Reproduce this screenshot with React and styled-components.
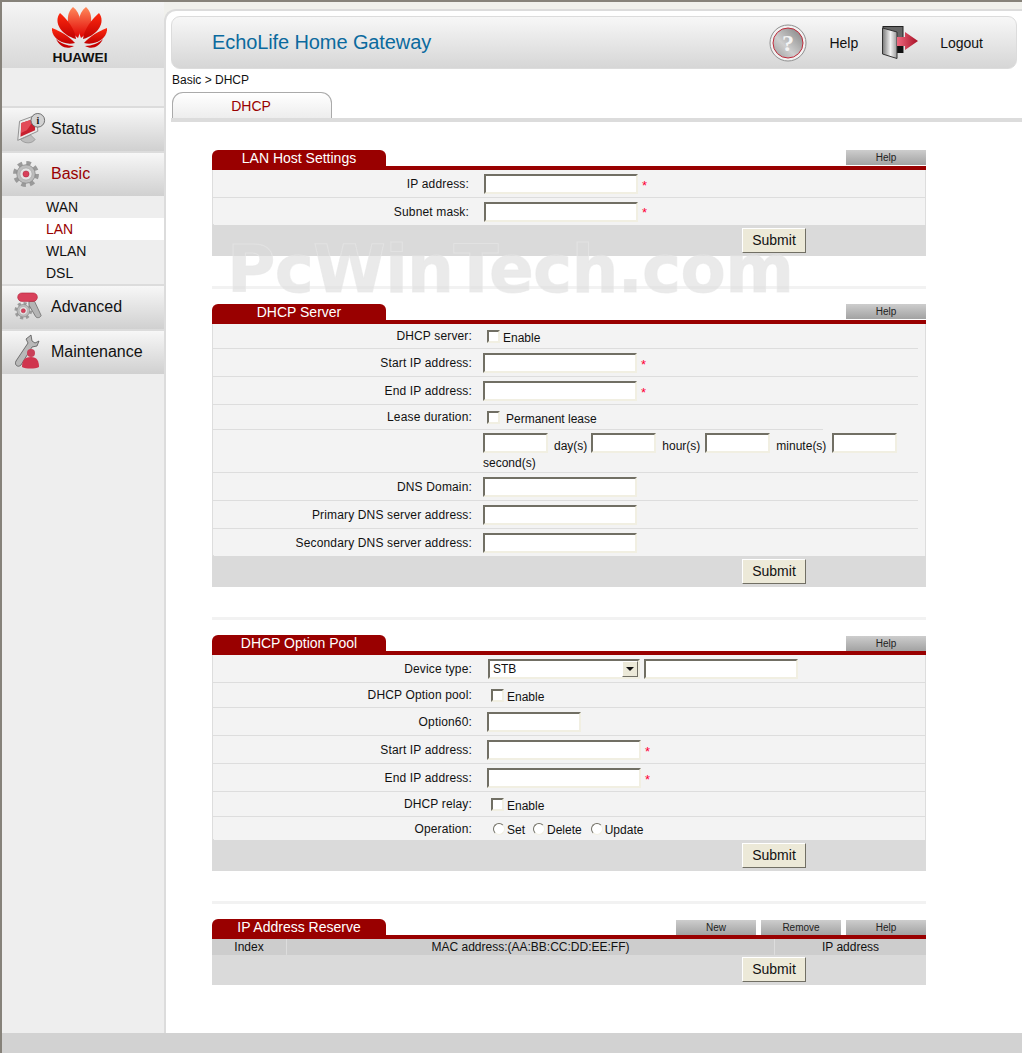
import React from 'react';
import styled, { createGlobalStyle } from 'styled-components';

const GlobalStyle = createGlobalStyle`
  html, body { margin: 0; padding: 0; background: #fff; }
  body { font-family: "Liberation Sans", Arial, sans-serif; font-size: 12px; color: #111; }
  * { box-sizing: border-box; }
`;

const Page = styled.div`
  position: relative;
  width: 1022px;
  height: 1053px;
  display: flex;
  flex-direction: column;
  border-top: 2px solid #86827a;
  border-left: 2px solid #86827a;
  overflow: hidden;
`;

const Body = styled.div`
  flex: 1;
  display: flex;
  min-height: 0;
`;

const PageFooter = styled.div`
  height: 20px;
  background: #d2d2d2;
`;

const Sidebar = styled.nav`
  width: 162px;
  flex-shrink: 0;
  background: #eee;
  display: flex;
  flex-direction: column;
`;

const LogoBox = styled.div`
  height: 66px;
  margin-bottom: 38px;
  background: linear-gradient(#f5f5f5, #d8d8d8);
  display: flex;
  flex-direction: column;
  align-items: center;
  padding: 5px 7px 0 0;
`;

const LogoText = styled.span`
  font-size: 13.5px;
  line-height: 13px;
  margin-top: 2px;
  font-weight: 700;
  color: #111;
  transform: scaleX(1.02);
`;

const NavItem = styled.a`
  height: 45px;
  display: flex;
  align-items: center;
  gap: 4px;
  padding: 0 0 2px 9px;
  border-top: 2px solid #dcdcdc;
  background: linear-gradient(#f7f7f7, #d0d0d0);
  font-size: 16px;
  color: ${(p) => (p.$active ? '#990000' : '#111')};
`;

const NavIconBox = styled.span`
  width: 36px;
  height: 36px;
  display: flex;
  align-items: center;
  padding-left: ${(p) => p.$offset || 0}px;
`;

const SubNav = styled.div`
  display: flex;
  flex-direction: column;
`;

const SubNavItem = styled.a`
  height: 22px;
  line-height: 22px;
  padding-left: 44px;
  font-size: 14px;
  color: ${(p) => (p.$active ? '#990000' : '#111')};
  background: ${(p) => (p.$active ? '#fff' : 'transparent')};
`;

const Main = styled.main`
  flex: 1;
  min-width: 0;
  background: #f0f0ec;
  padding-top: 7px;
`;

const MainInner = styled.div`
  height: 100%;
  background: #fff;
  border-top: 2px solid #dcdcdc;
  border-left: 2px solid #dcdcdc;
  border-top-left-radius: 12px;
  padding: 5px 0 0 5px;
`;

const TopBar = styled.header`
  width: 846px;
  height: 53px;
  display: flex;
  align-items: center;
  padding-left: 40px;
  border: 1px solid #dcdcdc;
  border-radius: 9px;
  background: linear-gradient(#f7f7f7, #d6d6d6);
`;

const ProductName = styled.h1`
  flex: 1;
  margin: 0;
  font-size: 20px;
  font-weight: 400;
  letter-spacing: -0.1px;
  color: #0b6a9e;
`;

const TopLink = styled.a`
  font-size: 14px;
  color: #111;
  margin: 0 ${(p) => p.$after}px 0 ${(p) => p.$before}px;
`;

const Breadcrumb = styled.div`
  height: 23px;
  line-height: 23px;
  padding-left: 1px;
  font-size: 12px;
`;

const TabStrip = styled.div`
  height: 30px;
  padding-left: 1px;
  border-bottom: 4px solid #dcdcdc;
`;

const Tab = styled.div`
  width: 160px;
  height: 26px;
  padding-right: 2px;
  text-align: center;
  line-height: 27px;
  font-size: 14px;
  color: #990000;
  border: 1px solid #aaa;
  border-bottom: 0;
  border-radius: 11px 11px 0 0;
  background: linear-gradient(#fff, #ededed);
`;

const Content = styled.div`
  width: 714px;
  margin: 28px 0 0 41px;
`;

const SectionHead = styled.div`
  height: 16px;
  display: flex;
  justify-content: space-between;
`;

const SectionTitle = styled.h2`
  width: 174px;
  height: 16px;
  margin: 0;
  font-size: 14px;
  font-weight: 400;
  line-height: 16px;
  text-align: center;
  color: #fff;
  background: #990000;
  border-radius: 6px 6px 0 0;
`;

const HeadButtons = styled.div`
  display: flex;
  gap: 5px;
  margin-top: ${(p) => (p.$low ? 1 : 0)}px;
`;

const HeadButton = styled.button`
  width: 80px;
  height: 15px;
  padding: 0;
  border: 0;
  font: 10px/15px "Liberation Sans", Arial, sans-serif;
  color: #222;
  background: linear-gradient(#cdcdcd, #a2a2a2);
`;

const RedBar = styled.div`
  height: 4px;
  background: #990000;
`;

const Rows = styled.div`
  background: #f3f3f3;
  border-left: 1px solid #ddd;
  border-right: 1px solid #ddd;
`;

const Row = styled.div`
  height: ${(p) => p.$h}px;
  display: grid;
  grid-template-columns: ${(p) => p.$label}px 1fr;
  align-items: ${(p) => (p.$top ? 'start' : 'center')};
  background-image: linear-gradient(#ddd, #ddd);
  background-repeat: no-repeat;
  background-size: ${(p) => p.$line || 714}px 1px;
  background-position: left bottom;
`;

const Label = styled.label`
  text-align: right;
  padding-right: ${(p) => p.$gap}px;
  padding-bottom: ${(p) => (p.$up ? 2 : 0)}px;
  font-size: 12px;
  letter-spacing: 0.15px;
  color: #111;
`;

const Field = styled.div`
  display: flex;
  align-items: center;
  font-size: 12px;
`;

const TextInput = styled.input`
  width: ${(p) => p.$w || 154}px;
  height: 20px;
  padding: 0 2px;
  background: #fff;
  border: 2px solid;
  border-color: #716f64 #f1efe2 #f1efe2 #716f64;
  flex-shrink: 0;
`;

const Required = styled.span`
  position: relative;
  top: 1px;
  margin-left: 4px;
  color: #ff0033;
  font-size: 13px;
`;

const CheckBox = styled.input`
  appearance: none;
  width: 13px;
  height: 13px;
  margin: 0 3px 0 4px;
  background: #fff;
  border: 2px solid;
  border-color: #716f64 #f1efe2 #f1efe2 #716f64;
  flex-shrink: 0;
`;

const Radio = styled.input`
  appearance: none;
  width: 12px;
  height: 12px;
  margin: 0 2px 0 ${(p) => p.$left || 0}px;
  background: #fff;
  border-radius: 50%;
  border: 1px solid;
  border-color: #716f64 #f1efe2 #f1efe2 #716f64;
`;

const CheckText = styled.span`
  font-size: 12px;
  margin-left: ${(p) => p.$left || 0}px;
  position: relative;
  top: 1px;
`;

const Duration = styled.div`
  width: 430px;
  padding-top: 3px;
  font-size: 12px;
  line-height: 20px;
`;

const DurationInput = styled(TextInput)`
  width: 65px;
  vertical-align: top;
`;

const Unit = styled.span`
  margin: 0 ${(p) => p.$after}px 0 ${(p) => p.$before}px;
  vertical-align: top;
  position: relative;
  top: 3px;
`;

const SelectBox = styled.div`
  width: 152px;
  height: 20px;
  display: flex;
  margin: 0 4px 0 1px;
  background: #fff;
  border: 2px solid;
  border-color: #716f64 #f1efe2 #f1efe2 #716f64;
`;

const SelectField = styled.select`
  appearance: none;
  flex: 1;
  min-width: 0;
  height: 100%;
  border: 0;
  padding: 0 0 0 3px;
  background: #fff;
  font: 12px "Liberation Sans", Arial, sans-serif;
  color: #111;
`;

const SelectArrow = styled.span`
  width: 16px;
  display: flex;
  align-items: center;
  justify-content: center;
  background: #ece9d8;
  border: 1px solid;
  border-color: #fff #716f64 #716f64 #fff;
  &::after {
    content: '';
    border: 4px solid transparent;
    border-top: 4px solid #111;
    border-bottom: 0;
  }
`;

const SubmitBar = styled.div`
  height: 31px;
  background: #dadada;
  display: flex;
  padding: 3px 120px 0 0;
  justify-content: flex-end;
`;

const SubmitButton = styled.button`
  width: 64px;
  height: 25px;
  padding: 0 0 2px;
  background: #ece9d8;
  border: 1px solid;
  border-color: #fff #716f64 #716f64 #fff;
  font: 14px "Liberation Sans", Arial, sans-serif;
  color: #111;
`;

const Divider = styled.div`
  height: 3px;
  margin: 30px 0 15px;
  background: #f2f2f2;
`;

const TableHead = styled.div`
  height: 15px;
  display: grid;
  grid-template-columns: 74px 1fr 151px;
  gap: 1px;
  background: #ddd;
`;

const TableCell = styled.div`
  background: #cdcdcd;
  text-align: center;
  line-height: 16px;
  font-size: 12px;
`;

const Watermark = styled.div`
  position: absolute;
  left: 225px;
  top: 228px;
  font-family: "DejaVu Sans", sans-serif;
  font-size: 66px;
  line-height: 80px;
  font-weight: 700;
  letter-spacing: -0.7px;
  white-space: nowrap;
  color: rgba(218, 218, 218, 0.58);
  -webkit-text-stroke: 1px rgba(232, 232, 232, 0.6);
  pointer-events: none;
`;

const HuaweiLogo = () => (
  <svg width="55" height="42" viewBox="0 0 55 42">
    <defs>
      <linearGradient id="petalTop" x1="0" y1="0" x2="0" y2="1">
        <stop offset="0" stopColor="#ff8a5c" />
        <stop offset="1" stopColor="#e00000" />
      </linearGradient>
      <linearGradient id="petalMid" x1="0" y1="0" x2="0" y2="1">
        <stop offset="0" stopColor="#ff2a10" />
        <stop offset="1" stopColor="#c00000" />
      </linearGradient>
    </defs>
    {[1, -1].map((side) => (
      <g key={side} transform={side < 0 ? 'translate(55 0) scale(-1 1)' : undefined}>
        <path d="M29 31C24 20 26 6 34 0C42 7 41 22 29 31Z" fill="url(#petalTop)" />
        <path d="M31 32C32 22 40 12 47 6C54 15 46 28 31 32Z" fill="url(#petalMid)" />
        <path d="M32 36C38 29 47 24 55 21C56 31 44 39 32 36Z" fill="url(#petalMid)" />
        <path d="M33 39C40 39 47 36 51 32C47 40 40 43 33 39Z" fill="#c80000" />
      </g>
    ))}
  </svg>
);

// 8 teeth from a dashed ring, disc and red hub on top
const Gear = ({ cx, cy, r }) => (
  <g>
    <circle cx={cx} cy={cy} r={r} fill="none" stroke="#9a9a9a" strokeWidth={r * 0.36} strokeDasharray={`${r * 0.42} ${r * 0.365}`} />
    <circle cx={cx} cy={cy} r={r * 0.84} fill="#bdbdbd" stroke="#808080" strokeWidth="0.7" />
    <circle cx={cx} cy={cy} r={r * 0.55} fill="#e4e4e4" stroke="#a5a5a5" strokeWidth="0.6" />
    <circle cx={cx} cy={cy} r={r * 0.28} fill="#d8405a" stroke="#a82038" strokeWidth="0.5" />
  </g>
);

const StatusIcon = () => (
  <svg width="31" height="33" viewBox="0 0 34 36">
    <path d="M6 30C10 35 19 35 22 30L17 25Z" fill="#bdbdbd" stroke="#888" strokeWidth="0.7" />
    <path d="M5 10L24 3L25 21L3 31Z" fill="#eaeaea" stroke="#8a8a8a" />
    <path d="M7 12L22 7L22 20L6 27Z" fill="#c8202f" />
    <path d="M7 12L22 7L13 20L6.5 23Z" fill="#e24a58" />
    <circle cx="25" cy="9" r="7.5" fill="#d2d2d2" stroke="#666" />
    <text x="25" y="13" fontSize="11" fontWeight="700" textAnchor="middle" fontFamily="Liberation Serif, serif" fill="#111">i</text>
  </svg>
);

const BasicIcon = () => (
  <svg width="28" height="30" viewBox="0 0 28 30">
    <Gear cx={14} cy={15} r={11} />
  </svg>
);

const AdvancedIcon = () => (
  <svg width="30" height="32" viewBox="0 0 32 32">
    <Gear cx={11} cy={20} r={8} />
    <path d="M17 10L23 10L30 25C29 28 25 28 24 26L17 14Z" fill="#b5b5b5" stroke="#666" strokeWidth="0.8" />
    <rect x="5" y="1" width="21" height="9" rx="4.5" fill="#d8405a" stroke="#b02038" strokeWidth="0.6" />
  </svg>
);

const MaintenanceIcon = () => (
  <svg width="30" height="36" viewBox="0 0 30 36">
    <path d="M20 1L15 5L17 9L5 27C3 31 7 34 10 31L21 13L26 12L28 7L24 9L21 7Z" fill="#b9b9b9" stroke="#555" strokeWidth="0.8" />
    <circle cx="20" cy="19" r="4" fill="#c94058" />
    <path d="M11 33C11 26 14 23 20 23C26 23 28 27 28 33C24 35 15 35 11 33Z" fill="#d0354e" />
  </svg>
);

const HelpIcon = () => (
  <svg width="38" height="38" viewBox="0 0 38 38">
    <defs>
      <linearGradient id="helpFill" x1="1" y1="0" x2="0" y2="1">
        <stop offset="0" stopColor="#7f7f7f" />
        <stop offset="0.6" stopColor="#cfcfcf" />
        <stop offset="1" stopColor="#9a9a9a" />
      </linearGradient>
    </defs>
    <circle cx="19" cy="19" r="18" fill="#f2f2f2" stroke="#8f8f8f" />
    <circle cx="19" cy="19" r="15" fill="url(#helpFill)" stroke="#c02a3a" strokeWidth="1" />
    <text x="19" y="27" fontSize="24" fontWeight="700" textAnchor="middle" fontFamily="Liberation Serif, serif" fill="#f4f4f4">?</text>
  </svg>
);

const LogoutIcon = () => (
  <svg width="36" height="33" viewBox="0 0 36 33">
    <defs>
      <linearGradient id="doorFill" x1="0" y1="0" x2="1" y2="0">
        <stop offset="0" stopColor="#777" />
        <stop offset="0.55" stopColor="#f2f2f2" />
        <stop offset="1" stopColor="#999" />
      </linearGradient>
      <linearGradient id="arrowFill" x1="0" y1="0" x2="1" y2="0">
        <stop offset="0" stopColor="#ef6a80" />
        <stop offset="1" stopColor="#a80f25" />
      </linearGradient>
    </defs>
    <rect x="1" y="0.5" width="20" height="26" fill="#666" stroke="#222" />
    <rect x="15" y="17" width="6" height="10" fill="#111" />
    <path d="M0.5 2L15 6L15 32.5L0.5 28Z" fill="url(#doorFill)" stroke="#333" />
    <path d="M15 11L23 11L23 6L36 15L23 24L23 20L15 20Z" fill="url(#arrowFill)" />
  </svg>
);

const SectionHeader = ({ title, buttons = ['Help'], low }) => (
  <>
    <SectionHead>
      <SectionTitle>{title}</SectionTitle>
      <HeadButtons $low={low}>
        {buttons.map((b) => (
          <HeadButton key={b}>{b}</HeadButton>
        ))}
      </HeadButtons>
    </SectionHead>
    <RedBar />
  </>
);

const Submit = () => (
  <SubmitBar>
    <SubmitButton>Submit</SubmitButton>
  </SubmitBar>
);

const server = { $label: 270 };
const pool = { $label: 274 };

const App = () => (
  <Page>
    <GlobalStyle />
    <Body>
      <Sidebar>
        <LogoBox>
          <HuaweiLogo />
          <LogoText>HUAWEI</LogoText>
        </LogoBox>
        <NavItem><NavIconBox $offset={4}><StatusIcon /></NavIconBox>Status</NavItem>
        <NavItem $active><NavIconBox $offset={1}><BasicIcon /></NavIconBox>Basic</NavItem>
        <SubNav>
          <SubNavItem>WAN</SubNavItem>
          <SubNavItem $active>LAN</SubNavItem>
          <SubNavItem>WLAN</SubNavItem>
          <SubNavItem>DSL</SubNavItem>
        </SubNav>
        <NavItem><NavIconBox $offset={2}><AdvancedIcon /></NavIconBox>Advanced</NavItem>
        <NavItem><NavIconBox><MaintenanceIcon /></NavIconBox>Maintenance</NavItem>
      </Sidebar>

      <Main>
        <MainInner>
          <TopBar>
            <ProductName>EchoLife Home Gateway</ProductName>
            <HelpIcon />
            <TopLink $before={22} $after={24}>Help</TopLink>
            <LogoutIcon />
            <TopLink $before={22} $after={33}>Logout</TopLink>
          </TopBar>
          <Breadcrumb>Basic &gt; DHCP</Breadcrumb>
          <TabStrip>
            <Tab>DHCP</Tab>
          </TabStrip>

          <Content>
            <SectionHeader title="LAN Host Settings" />
            <Rows>
              <Row $h={28} $label={271}>
                <Label $gap={15}>IP address:</Label>
                <Field><TextInput /><Required>*</Required></Field>
              </Row>
              <Row $h={27} $label={271} $line={1}>
                <Label $gap={15}>Subnet mask:</Label>
                <Field><TextInput /><Required>*</Required></Field>
              </Row>
            </Rows>
            <Submit />
            <Divider />

            <SectionHeader title="DHCP Server" />
            <Rows>
              <Row $h={25} {...server} $line={705}>
                <Label $gap={11} $up>DHCP server:</Label>
                <Field><CheckBox type="checkbox" /><CheckText>Enable</CheckText></Field>
              </Row>
              <Row $h={28} {...server} $line={705}>
                <Label $gap={11}>Start IP address:</Label>
                <Field><TextInput /><Required>*</Required></Field>
              </Row>
              <Row $h={28} {...server} $line={705}>
                <Label $gap={11}>End IP address:</Label>
                <Field><TextInput /><Required>*</Required></Field>
              </Row>
              <Row $h={25} {...server} $line={610}>
                <Label $gap={11} $up>Lease duration:</Label>
                <Field><CheckBox type="checkbox" /><CheckText $left={3}>Permanent lease</CheckText></Field>
              </Row>
              <Row $h={43} {...server} $top $line={705}>
                <span />
                <Duration>
                  <DurationInput />
                  <Unit $before={6} $after={4}>day(s)</Unit>
                  <DurationInput />
                  <Unit $before={6} $after={5}>hour(s)</Unit>
                  <DurationInput />
                  <Unit $before={6} $after={6}>minute(s)</Unit>
                  <DurationInput />
                  <br />
                  second(s)
                </Duration>
              </Row>
              <Row $h={28} {...server} $line={705}>
                <Label $gap={11}>DNS Domain:</Label>
                <Field><TextInput /></Field>
              </Row>
              <Row $h={28} {...server} $line={705}>
                <Label $gap={11}>Primary DNS server address:</Label>
                <Field><TextInput /></Field>
              </Row>
              <Row $h={27} {...server} $line={1}>
                <Label $gap={11}>Secondary DNS server address:</Label>
                <Field><TextInput /></Field>
              </Row>
            </Rows>
            <Submit />
            <Divider />

            <SectionHeader title="DHCP Option Pool" low />
            <Rows>
              <Row $h={28} {...pool}>
                <Label $gap={15}>Device type:</Label>
                <Field>
                  <SelectBox>
                    <SelectField defaultValue="STB"><option>STB</option></SelectField>
                    <SelectArrow />
                  </SelectBox>
                  <TextInput />
                </Field>
              </Row>
              <Row $h={25} {...pool}>
                <Label $gap={15} $up>DHCP Option pool:</Label>
                <Field><CheckBox type="checkbox" /><CheckText>Enable</CheckText></Field>
              </Row>
              <Row $h={28} {...pool}>
                <Label $gap={15}>Option60:</Label>
                <Field><TextInput $w={94} /></Field>
              </Row>
              <Row $h={28} {...pool}>
                <Label $gap={15}>Start IP address:</Label>
                <Field><TextInput /><Required>*</Required></Field>
              </Row>
              <Row $h={28} {...pool}>
                <Label $gap={15}>End IP address:</Label>
                <Field><TextInput /><Required>*</Required></Field>
              </Row>
              <Row $h={25} {...pool}>
                <Label $gap={15} $up>DHCP relay:</Label>
                <Field><CheckBox type="checkbox" /><CheckText>Enable</CheckText></Field>
              </Row>
              <Row $h={23} {...pool} $line={1}>
                <Label $gap={15}>Operation:</Label>
                <Field>
                  <Radio type="radio" name="op" $left={6} />
                  <CheckText>Set</CheckText>
                  <Radio type="radio" name="op" $left={8} />
                  <CheckText>Delete</CheckText>
                  <Radio type="radio" name="op" $left={9} />
                  <CheckText>Update</CheckText>
                </Field>
              </Row>
            </Rows>
            <Submit />
            <Divider />

            <SectionHeader title="IP Address Reserve" buttons={['New', 'Remove', 'Help']} low />
            <TableHead>
              <TableCell>Index</TableCell>
              <TableCell>MAC address:(AA:BB:CC:DD:EE:FF)</TableCell>
              <TableCell>IP address</TableCell>
            </TableHead>
            <Submit />
          </Content>
        </MainInner>
      </Main>
    </Body>
    <PageFooter />
    <Watermark>PcWinTech.com</Watermark>
  </Page>
);

export default App;
